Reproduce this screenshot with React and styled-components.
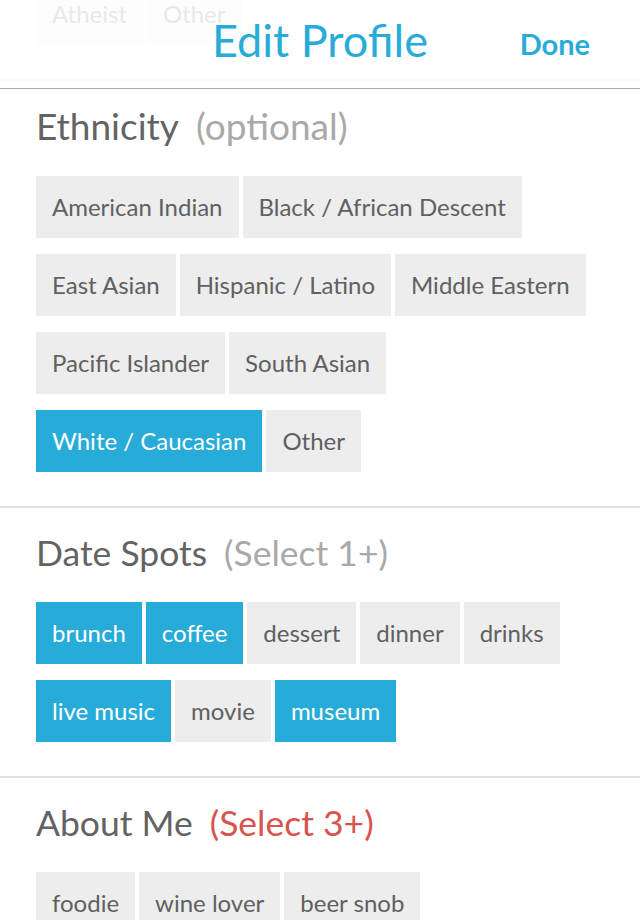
import React from "react";
import styled, { createGlobalStyle } from "styled-components";

const Global = createGlobalStyle`
  html, body { margin: 0; padding: 0; background: #fff; }
  body { font-family: Lato, "Open Sans", sans-serif; overflow: hidden; }
  * { box-sizing: border-box; }
`;

const BLUE = "#27acd9";

const Screen = styled.div`
  position: relative;
  width: 640px;
  height: 920px;
  overflow: hidden;
  background: #fff;
`;

const Header = styled.header`
  position: absolute;
  top: 0;
  left: 0;
  right: 0;
  height: 89px;
  z-index: 2;
  display: grid;
  grid-template-columns: 1fr auto 1fr;
  align-items: baseline;
  padding: 14px 50px 0 50px;
  background: rgba(255, 255, 255, 0.86);
  border-bottom: 1px solid #a9a9a9;
`;

const HeaderTitle = styled.h1`
  grid-column: 2;
  margin: 0;
  font-size: 45px;
  line-height: 52px;
  font-weight: 400;
  color: ${BLUE};
`;

const DoneButton = styled.button`
  grid-column: 3;
  justify-self: end;
  border: 0;
  padding: 0;
  background: none;
  font-family: inherit;
  font-size: 29px;
  font-weight: 700;
  color: ${BLUE};
  position: relative;
  top: -2px;
`;

const Scroller = styled.div`
  margin-top: -17px;
`;

const Section = styled.section`
  padding: ${(p) => (p.$cut ? "0" : "23px")} 36px 34px;
  border-top: ${(p) => (p.$cut ? "none" : "2px solid #e0e0e0")};
`;

const Title = styled.h2`
  margin: 0 0 ${(p) => (p.$size > 36 ? 28 : 27)}px;
  font-size: ${(p) => p.$size}px;
  line-height: 44px;
  font-weight: 400;
  color: #636363;
`;

const Hint = styled.span`
  margin-left: 17px;
  color: ${(p) => (p.$required ? "#d9534f" : "#a9a9a9")};
`;

const Chips = styled.div`
  display: flex;
  flex-wrap: wrap;
  gap: 16px 4px;
`;

const Chip = styled.button`
  height: 62px;
  padding: 0 16px 2px;
  border: 0;
  border-radius: 0;
  font-family: inherit;
  font-size: 24px;
  font-weight: 400;
  background: ${(p) => (p.$on ? BLUE : "#ededed")};
  color: ${(p) => (p.$on ? "#ffffff" : "#606060")};
  display: flex;
  align-items: center;
`;

const sections = [
  {
    title: "Ethnicity",
    hint: "(optional)",
    size: 37,
    chips: [
      ["American Indian"],
      ["Black / African Descent"],
      ["East Asian"],
      ["Hispanic / Latino"],
      ["Middle Eastern"],
      ["Pacific Islander"],
      ["South Asian"],
      ["White / Caucasian", true],
      ["Other"],
    ],
  },
  {
    title: "Date Spots",
    hint: "(Select 1+)",
    size: 35.5,
    chips: [
      ["brunch", true],
      ["coffee", true],
      ["dessert"],
      ["dinner"],
      ["drinks"],
      ["live music", true],
      ["movie"],
      ["museum", true],
    ],
  },
  {
    title: "About Me",
    hint: "(Select 3+)",
    size: 35.5,
    required: true,
    chips: [["foodie"], ["wine lover"], ["beer snob"]],
  },
];

export default function App() {
  return (
    <Screen>
      <Global />
      <Header>
        <HeaderTitle>Edit Profile</HeaderTitle>
        <DoneButton>Done</DoneButton>
      </Header>
      <Scroller>
        <Section $cut>
          <Chips>
            <Chip>Atheist</Chip>
            <Chip>Other</Chip>
          </Chips>
        </Section>
        {sections.map((s) => (
          <Section key={s.title}>
            <Title $size={s.size}>
              {s.title}
              <Hint $required={s.required}>{s.hint}</Hint>
            </Title>
            <Chips>
              {s.chips.map(([label, on]) => (
                <Chip key={label} $on={on}>
                  {label}
                </Chip>
              ))}
            </Chips>
          </Section>
        ))}
      </Scroller>
    </Screen>
  );
}
